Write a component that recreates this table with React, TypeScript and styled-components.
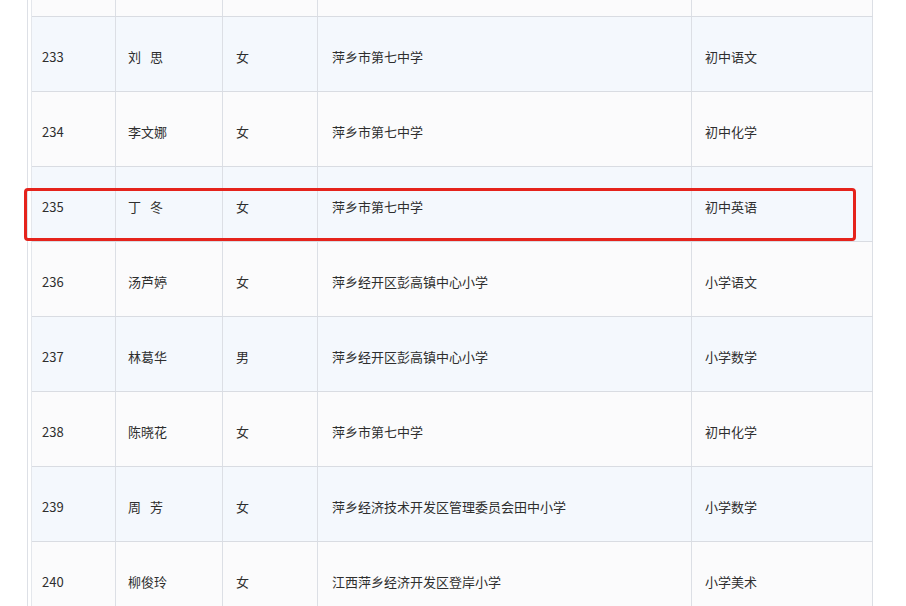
import React from "react";
import styled, { createGlobalStyle } from "styled-components";

const Global = createGlobalStyle`
  html, body { margin: 0; padding: 0; background: #ffffff; overflow: hidden; }
  body { font-family: "Microsoft YaHei", "Noto Sans CJK SC", "Noto Sans", sans-serif; }
`;

const Page = styled.div`
  width: 906px;
  height: 606px;
  background: #ffffff;
  position: relative;
  overflow: hidden;
  padding-left: 27px;
  box-sizing: border-box;
`;

const Frame = styled.div`
  border-left: 1px solid #dde0e6;
  padding-left: 3px;
  width: 842px;
`;

const Table = styled.div`
  display: flex;
  flex-direction: column;
  border-left: 1px solid #e4e7ec;
`;

const COLS = "84px 107px 95px 374px 181px";

const Row = styled.div<{ $striped: boolean; $h: number; $top?: boolean }>`
  display: grid;
  grid-template-columns: ${COLS};
  height: ${(p) => p.$h}px;
  box-sizing: border-box;
  border-top: ${(p) => (p.$top ? "none" : "1px solid #d9dce2")};
  background: ${(p) => (p.$striped ? "#f4f8fd" : "#fbfbfc")};
`;

const Cell = styled.div<{ $pad: number }>`
  display: flex;
  align-items: center;
  padding-left: ${(p) => p.$pad}px;
  padding-top: 5px;
  box-sizing: border-box;
  border-right: 1px solid #dcdfe5;
  font-size: 13px;
  color: #2e2e2e;
  white-space: pre;
`;

const Highlight = styled.div`
  position: absolute;
  left: 24px;
  top: 188px;
  width: 832px;
  height: 53px;
  box-sizing: border-box;
  border: 3px solid #e5231c;
  border-radius: 4px;
`;

const pads = [10, 12, 13, 14, 13];

const GAP = "\u2002\u2009";

const rows: string[][] = [
  ["233", `刘${GAP}思`, "女", "萍乡市第七中学", "初中语文"],
  ["234", "李文娜", "女", "萍乡市第七中学", "初中化学"],
  ["235", `丁${GAP}冬`, "女", "萍乡市第七中学", "初中英语"],
  ["236", "汤芦婷", "女", "萍乡经开区彭高镇中心小学", "小学语文"],
  ["237", "林葛华", "男", "萍乡经开区彭高镇中心小学", "小学数学"],
  ["238", "陈晓花", "女", "萍乡市第七中学", "初中化学"],
  ["239", `周${GAP}芳`, "女", "萍乡经济技术开发区管理委员会田中小学", "小学数学"],
  ["240", "柳俊玲", "女", "江西萍乡经济开发区登岸小学", "小学美术"],
];

export default function App() {
  return (
    <>
      <Global />
      <Page>
        <Frame>
          <Table>
            <Row $striped={false} $h={16} $top>
              {pads.map((p, i) => (
                <Cell key={i} $pad={p} />
              ))}
            </Row>
            {rows.map((r, ri) => (
              <Row key={r[0]} $striped={ri % 2 === 0} $h={75}>
                {r.map((t, ci) => (
                  <Cell key={ci} $pad={pads[ci]}>
                    {t}
                  </Cell>
                ))}
              </Row>
            ))}
          </Table>
        </Frame>
        <Highlight />
      </Page>
    </>
  );
}
